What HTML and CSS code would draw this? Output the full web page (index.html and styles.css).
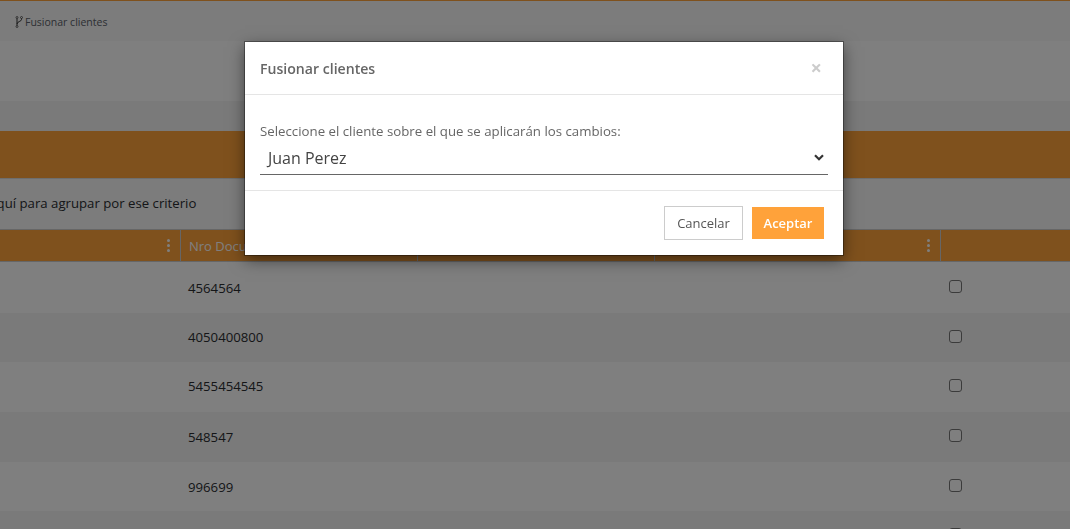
FILE: index.html
```
<!DOCTYPE html>
<html lang="es">
<head>
<meta charset="utf-8">
<title>Fusionar clientes</title>
<link rel="stylesheet" href="styles.css">
</head>
<body>
<div class="page">
  <div class="toolbar">
    <svg class="merge-icon" width="8" height="12" viewBox="0 0 8 12"><path d="M2 2.500v7M6.500 2.500v1C6.500 5.500 2 5.500 2 8" fill="none" stroke="#333" stroke-width="1"/><circle cx="2" cy="1.500" r="1" fill="none" stroke="#333" stroke-width=".7"/><circle cx="6.500" cy="1.500" r="1" fill="none" stroke="#333" stroke-width=".7"/><circle cx="2" cy="10.500" r="1" fill="none" stroke="#333" stroke-width=".7"/></svg>
    <span>Fusionar clientes</span>
  </div>
  <div class="blank"></div>
  <div class="subbar"></div>
  <div class="title-band"></div>
  <div class="group-panel"><span class="group-text">Arrastre una columna aquí para agrupar por ese criterio</span></div>
  <div class="grid-head">
    <div class="hcell c1"><span class="dots"><i></i><i></i><i></i></span></div>
    <div class="hcell c2">Nro Documento</div>
    <div class="hcell c3"></div>
    <div class="hcell c4"><span class="dots"><i></i><i></i><i></i></span></div>
    <div class="hcell c5"></div>
  </div>
  <div class="row r1"><div class="doc">4564564</div><div class="chk"><span class="box"></span></div></div>
  <div class="row r2"><div class="doc">4050400800</div><div class="chk"><span class="box"></span></div></div>
  <div class="row r3"><div class="doc">5455454545</div><div class="chk"><span class="box"></span></div></div>
  <div class="row r4"><div class="doc">548547</div><div class="chk"><span class="box"></span></div></div>
  <div class="row r5"><div class="doc">996699</div><div class="chk"><span class="box"></span></div></div>
  <div class="row r6"><div class="doc"></div><div class="chk"><span class="box"></span></div></div>
</div>
<div class="backdrop"></div>
<div class="modal">
  <div class="modal-head">
    <h5 class="modal-title">Fusionar clientes</h5>
    <span class="close">×</span>
  </div>
  <div class="modal-body">
    <label class="field-label">Seleccione el cliente sobre el que se aplicarán los cambios:</label>
    <div class="select">
      <span>Juan Perez</span>
      <svg width="10" height="7" viewBox="0 0 10 7"><path d="M1 1.200 5 5.200l4-4" fill="none" stroke="#333" stroke-width="2.200"/></svg>
    </div>
  </div>
  <div class="modal-foot">
    <button class="btn btn-cancel">Cancelar</button>
    <button class="btn btn-ok">Aceptar</button>
  </div>
</div>
</body>
</html>
```
FILE: styles.css
```
* { box-sizing: border-box; }
html, body { margin: 0; height: 100%; overflow: hidden; }
body { font-family: "Open Sans", "Liberation Sans", sans-serif; color: #2a2d31; background: #fff; }
.page { height: 529px; overflow: hidden; }
.toolbar { height: 41px; background: #f8f8f8; border-top: 1px solid #ffa23a; padding: 1px 0 0 15px; display: flex; align-items: center; gap: 2px; font-size: 10.500px; color: #5a6068; }
.merge-icon { flex: none; }
.blank { height: 60px; background: #fff; }
.subbar { height: 30px; background: #f4f4f4; }
.title-band { height: 47px; background: #ffa23a; }
.group-panel { height: 51px; padding-bottom: 2px; background: #f8f8f8; border-top: 1px solid #ddd; overflow: hidden; display: flex; align-items: center; font-size: 13.200px; white-space: nowrap; }
.group-text { flex: none; margin-left: -148px; }
.grid-head { height: 33px; display: grid; grid-template-columns: 181px 237px 237px 286px 129px; background: #ffa23a; border-top: 1px solid #ccc; border-bottom: 1px solid #ccc; }
.hcell { border-right: 1px solid #ccc; color: #fff; font-size: 13px; font-weight: 500; display: flex; align-items: center; justify-content: flex-end; padding-right: 10px; }
.hcell.c2 { justify-content: flex-start; padding-left: 8px; }
.hcell.c5 { border-right: 0; }
.dots { display: flex; flex-direction: column; gap: 2px; }
.dots i { width: 3px; height: 3px; border-radius: 50%; background: #fff; }
.row { display: grid; grid-template-columns: 181px 768px 121px; align-items: start; padding-top: 15px; font-size: 13.200px; line-height: 18px; }
.doc { grid-column: 1; padding-left: 188px; white-space: nowrap; }
.chk { grid-column: 3; display: flex; }
.box { display: block; width: 13px; height: 13px; margin-top: 2px; border: 1px solid #777; border-radius: 3px; background: #fff; }
.r1 { height: 51px; padding-top: 17px; background: #fff; }
.r1 .box { margin-top: 1px; }
.r2 { height: 49px; background: #f4f4f4; }
.r3 { height: 50px; background: #fff; }
.r4 { height: 50px; padding-top: 16px; background: #f4f4f4; }
.r4 .box { margin-top: 1px; }
.r5 { height: 49px; padding-top: 16px; background: #fff; }
.r5 .box { margin-top: 1px; }
.r6 { height: 50px; background: #f4f4f4; }
.backdrop { position: fixed; inset: 0; background: rgba(0,0,0,.5); }
.modal { position: absolute; left: 245px; top: 42px; width: 598px; height: 213px; background: #fff; box-shadow: 0 0 0 1px rgba(0,0,0,.35), 0 5px 15px rgba(0,0,0,.5); display: flex; flex-direction: column; }
.modal-head { height: 53px; border-bottom: 1px solid #e5e5e5; display: flex; align-items: center; justify-content: space-between; padding: 0 21px 0 15px; }
.modal-title { margin: 0; font-size: 14.100px; font-weight: 600; color: #666; }
.close { font-size: 20px; font-weight: 700; color: #ccc; line-height: 1; }
.modal-body { height: 96px; padding: 27px 15px 0; border-bottom: 1px solid #e5e5e5; }
.field-label { display: block; font-size: 13.250px; color: #666; line-height: 18px; }
.select { height: 35px; padding: 1px 4px 0 8px; border-bottom: 1px solid #666; display: flex; align-items: center; justify-content: space-between; font-size: 16px; color: #444; }
.modal-foot { height: 64px; display: flex; align-items: center; justify-content: flex-end; gap: 9px; padding: 0 19px 0 0; }
.btn { height: 34px; font: inherit; font-size: 13px; border-radius: 0; cursor: pointer; }
.btn-cancel { width: 79px; background: #fff; border: 1px solid #ccc; color: #555; }
.btn-ok { width: 72px; height: 32px; background: #ffa23a; border: 0; color: #fff; font-weight: 600; }
```
